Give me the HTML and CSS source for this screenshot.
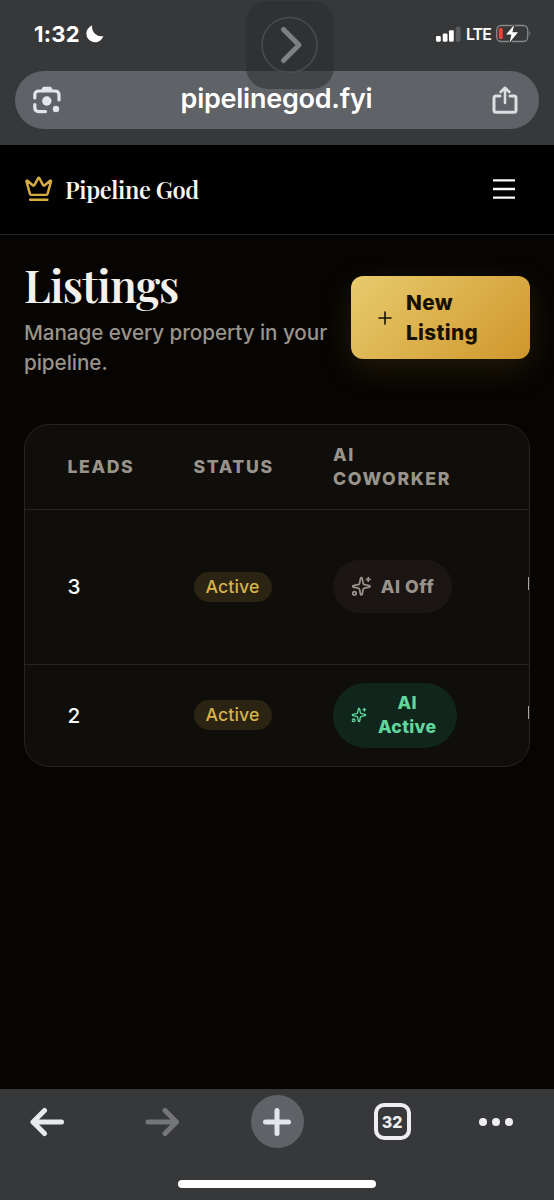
FILE: index.html
```html
<!DOCTYPE html>
<html lang="en">
<head>
<meta charset="utf-8">
<title>Pipeline God</title>
<link rel="stylesheet" href="styles.css">
</head>
<body>
<svg class="defs" width="0" height="0">
  <symbol id="sparkles" viewBox="0 0 24 24" fill="none" stroke="currentColor" stroke-width="2" stroke-linecap="round" stroke-linejoin="round">
    <path d="M11.017 2.814a1 1 0 0 1 1.966 0l1.051 5.558a2 2 0 0 0 1.594 1.594l5.558 1.051a1 1 0 0 1 0 1.966l-5.558 1.051a2 2 0 0 0-1.594 1.594l-1.051 5.558a1 1 0 0 1-1.966 0l-1.051-5.558a2 2 0 0 0-1.594-1.594l-5.558-1.051a1 1 0 0 1 0-1.966l5.558-1.051a2 2 0 0 0 1.594-1.594z"/>
    <path d="M20 2v4M22 4h-4"/><circle cx="4" cy="20" r="2"/>
  </symbol>
</svg>
<div class="phone">
  <div class="chrome-top">
    <div class="status">
      <div class="clock"><span>1:32</span>
        <svg width="18" height="18" viewBox="0 0 18 18"><path d="M6.200 .5C5.200 6 9.800 12.300 17.400 11C15.800 15 12.800 17.300 9 17.300A8.500 8.500 0 0 1 .4 8.700C.4 5 2.800 1.800 6.200 .5Z" fill="#fff"/></svg>
      </div>
      <div class="signals">
        <svg width="25" height="16" viewBox="0 0 26 16"><g fill="#fff"><rect x="0" y="10" width="5" height="6" rx="1.200"/><rect x="7" y="7.500" width="5" height="8.500" rx="1.200"/><rect x="13.500" y="4" width="5" height="12" rx="1.200"/></g><rect x="20.500" y="0.500" width="5" height="15.500" rx="1.200" fill="#5c5d5f"/></svg>
        <span>LTE</span>
        <svg width="36" height="20" viewBox="0 0 36 20"><rect x=".7" y="1.500" width="31" height="16" rx="4.500" fill="none" stroke="#87888a" stroke-width="1.300"/><path d="M33.400 7.200q2 2.200 0 4.600z" fill="#87888a"/><rect x="2.800" y="3.900" width="3.900" height="11.200" rx="1.300" fill="#ee4438"/><path d="M18.300 .8L10 10.600h5.400L13.600 18.600L22 8.200h-5.600z" fill="#fff" stroke="#373839" stroke-width="2" paint-order="stroke"/></svg>
      </div>
    </div>
    <div class="address">
      <svg width="28" height="28" viewBox="0 0 28 28" fill="none" stroke="#e3e5ea" stroke-width="3.200"><path d="M1.800 12V9Q1.800 5 6 5H22Q26 5 26 9V14" stroke-linecap="round"/><path d="M8.500 4.800L10.500 1.500H17.500L19.500 4.800Z" fill="#e3e5ea" stroke-width="1.500" stroke-linejoin="round"/><path d="M1.800 18.500V21.500Q1.800 25.600 6 25.600H12.500" stroke-linecap="round"/><circle cx="13.800" cy="15" r="4.700" fill="#e3e5ea" stroke="none"/><circle cx="23" cy="23" r="3.200" fill="#e3e5ea" stroke="none"/></svg>
      <span class="url">pipelinegod.fyi</span>
      <svg width="26" height="28" viewBox="0 0 26 28" fill="none" stroke="#dcdee1" stroke-width="3" stroke-linecap="round" stroke-linejoin="round"><path d="M8 10H4Q2 10 2 12V24.200Q2 26.200 4 26.200H22Q24 26.200 24 24.200V12Q24 10 22 10H18"/><path d="M13 17V2.500M8.700 6L13 1.800L17.300 6" stroke-width="2.600"/></svg>
    </div>
    <div class="assist"><svg width="58" height="58" viewBox="0 0 58 58" fill="none"><circle cx="28.500" cy="29" r="27.500" stroke="#4a4b4d" stroke-width="1.600"/><path d="M22.500 13.500L38 29L22.500 44.500" stroke="#7f8082" stroke-width="5" stroke-linecap="round" stroke-linejoin="round"/></svg></div>
  </div>

  <header class="site-header">
    <div class="brand">
      <svg width="29.500" height="29.500" viewBox="0 0 24 24" fill="none" stroke="#d6ad43" stroke-width="2" stroke-linecap="round" stroke-linejoin="round"><path d="M11.562 3.266a.5.5 0 0 1 .876 0L15.390 8.870a1 1 0 0 0 1.516.294L21.183 5.500a.5.5 0 0 1 .798.519l-2.834 10.246a1 1 0 0 1-.956.734H5.810a1 1 0 0 1-.957-.734L2.020 6.020a.5.5 0 0 1 .798-.519l4.276 3.664a1 1 0 0 0 1.516-.294z"/><path d="M5 21h14"/></svg>
      <span>Pipeline God</span>
    </div>
    <svg class="menu" width="22" height="22" viewBox="0 0 22 22" stroke="#faf7f5" stroke-width="2.300"><path d="M0 2.300H22M0 11H22M0 19.700H22"/></svg>
  </header>

  <main class="page">
    <section class="intro">
      <div class="intro-text">
        <h1>Listings</h1>
        <p>Manage every property in your pipeline.</p>
      </div>
      <div class="new-button">
        <svg width="14" height="14" viewBox="0 0 14 14" stroke="#171004" stroke-width="1.600" stroke-linecap="round"><path d="M7 1v12M1 7h12"/></svg>
        <span>New<br>Listing</span>
      </div>
    </section>

    <section class="table">
      <div class="row head"><span>LEADS</span><span>STATUS</span><span>AI<br>COWORKER</span></div>
      <div class="row first">
        <span>3</span><div><b class="badge">Active</b></div>
        <div><div class="pill off"><svg width="20.700" height="20.700"><use href="#sparkles"/></svg><span>AI Off</span></div></div>
        <i class="edge"></i>
      </div>
      <div class="row second">
        <span>2</span><div><b class="badge">Active</b></div>
        <div><div class="pill on"><svg width="16" height="16"><use href="#sparkles"/></svg><span>AI<br>Active</span></div></div>
        <i class="edge"></i>
      </div>
    </section>
  </main>

  <nav class="chrome-bottom">
    <div class="tools">
      <svg width="36" height="30" viewBox="0 0 36 30" fill="none" stroke="#e8e9ed" stroke-width="5" stroke-linecap="round" stroke-linejoin="round"><path d="M32.500 15H4M15.500 3.500L4 15L15.500 26.500"/></svg>
      <svg width="36" height="30" viewBox="0 0 36 30" fill="none" stroke="#747577" stroke-width="5" stroke-linecap="round" stroke-linejoin="round"><path d="M4 15H32.500M21 3.500L32.500 15L21 26.500"/></svg>
      <div class="add"><svg width="28" height="28" viewBox="0 0 28 28" stroke="#e3e5ea" stroke-width="5" stroke-linecap="round"><path d="M14 2.500v23M2.500 14h23"/></svg></div>
      <div class="tabs">32</div>
      <div class="dots"><i></i><i></i><i></i></div>
    </div>
    <div class="home"></div>
  </nav>
</div>
</body>
</html>
```

FILE: styles.css
```css
* { box-sizing: border-box; }
body { margin: 0; background: #060503; font-family: Inter, "Liberation Sans", sans-serif; }
.defs { position: absolute; }
svg { display: block; flex: none; }
.phone { width: 554px; height: 1200px; display: flex; flex-direction: column; overflow: hidden; }

.chrome-top { position: relative; height: 145px; flex: none; background: #373839; padding: 22px 15px 0; }
.status { height: 49px; display: flex; justify-content: space-between; padding: 0 7px 0 19px; color: #fff; }
.clock { height: 23px; display: flex; align-items: center; gap: 6px; font-size: 22px; font-weight: 750; letter-spacing: .2px; }
.signals { height: 23px; display: flex; align-items: center; gap: 5px; font-size: 16px; font-weight: 600; }
.signals span { letter-spacing: -.9px; }
.address { height: 58px; border-radius: 29px; background: #5f6266; display: flex; align-items: center; justify-content: space-between; padding: 0 21px 0 18px; color: #fff; }
.url { font-size: 27px; font-weight: 570; line-height: 54px; padding-bottom: 3px; letter-spacing: -.25px; }
.assist { position: absolute; left: 246px; top: 1px; width: 88px; height: 88px; border-radius: 22px; background: rgba(40,41,43,.5); display: flex; align-items: center; justify-content: center; }

.site-header { height: 90px; flex: none; background: #020102; border-bottom: 1.500px solid #252525; display: flex; align-items: center; justify-content: space-between; padding: 0 39px 1px 24px; }
.brand { display: flex; align-items: center; gap: 12px; color: #f7f5f2; font: 640 23.6px/36px "Playfair Display", "Liberation Serif", serif; letter-spacing: -.38px; }
.brand svg { margin-left: -.5px; }
.brand span { padding-bottom: 1px; }

.page { flex: 1; padding: 25px 24px 0; background: #060503; }
.intro { display: flex; justify-content: space-between; height: 164px; }
.intro-text { width: 310px; }
h1 { margin: 0; height: 58px; color: #f4f1ec; font: 640 44.3px/50px "Playfair Display", "Liberation Serif", serif; letter-spacing: -.75px; }
.intro p { margin: 0; width: 310px; color: #99938b; font-size: 20.700px; font-weight: 540; line-height: 29.500px; letter-spacing: -.07px; }
.new-button { width: 179px; height: 83px; margin-top: 16px; border-radius: 12px; background: linear-gradient(135deg, #e8cb6c, #cf962c); box-shadow: 0 10px 34px rgba(211,162,54,.14); display: flex; align-items: center; gap: 14px; padding-left: 27px; color: #171004; font-size: 20.700px; font-weight: 780; line-height: 29.500px; letter-spacing: .38px; }

.table { height: 343px; border: 1.500px solid #262521; border-radius: 25px; background: #0f0e0a; overflow: hidden; }
.row { display: grid; grid-template-columns: 126px 139.500px 195px 2px; padding-left: 42.500px; align-items: center; color: #fafafa; font-size: 20.700px; font-weight: 550; }
.head { height: 85px; border-bottom: 1.500px solid #262521; color: #99938b; font-size: 17.700px; font-weight: 800; line-height: 24px; letter-spacing: 1.600px; }
.first { height: 155px; border-bottom: 1.500px solid #262521; padding-bottom: 1px; }
.second { height: 102px; padding-bottom: 2px; }
.badge { display: block; width: 78px; height: 30px; border-radius: 15px; background: #2c2413; color: #d8b349; font-size: 17.700px; font-weight: 550; line-height: 30px; text-align: center; letter-spacing: .15px; }
.pill { display: flex; align-items: center; padding-left: 18px; font-size: 17.700px; font-weight: 760; line-height: 23.600px; text-align: center; letter-spacing: .3px; }
.off { width: 119px; height: 53px; border-radius: 27px; background: #1b1614; color: #99938b; gap: 9px; letter-spacing: .6px; }
.on { width: 124px; height: 65px; border-radius: 33px; background: #10251c; color: #60d69b; gap: 11px; }
.edge { width: 1px; height: 13px; background: #aaa69e; margin-top: -6px; }

.chrome-bottom { height: 111px; flex: none; background: #373839; padding-top: 5px; display: flex; flex-direction: column; align-items: center; }
.tools { width: 100%; height: 55px; display: grid; grid-template-columns: 94px 136px 94px 136px 72px; align-items: center; justify-items: center; }
.add { width: 53px; height: 53px; border-radius: 50%; background: #5f6266; display: flex; align-items: center; justify-content: center; }
.tabs { width: 37px; height: 37px; border: 4px solid #eeeef0; border-radius: 10px; color: #eeeef0; display: flex; align-items: center; justify-content: center; font-size: 16px; font-weight: 800; }
.dots { display: flex; gap: 5px; }
.dots i { width: 8px; height: 8px; border-radius: 50%; background: #eeeef0; }
.home { width: 198px; height: 8px; margin-top: 31px; border-radius: 4px; background: #fff; }
```
